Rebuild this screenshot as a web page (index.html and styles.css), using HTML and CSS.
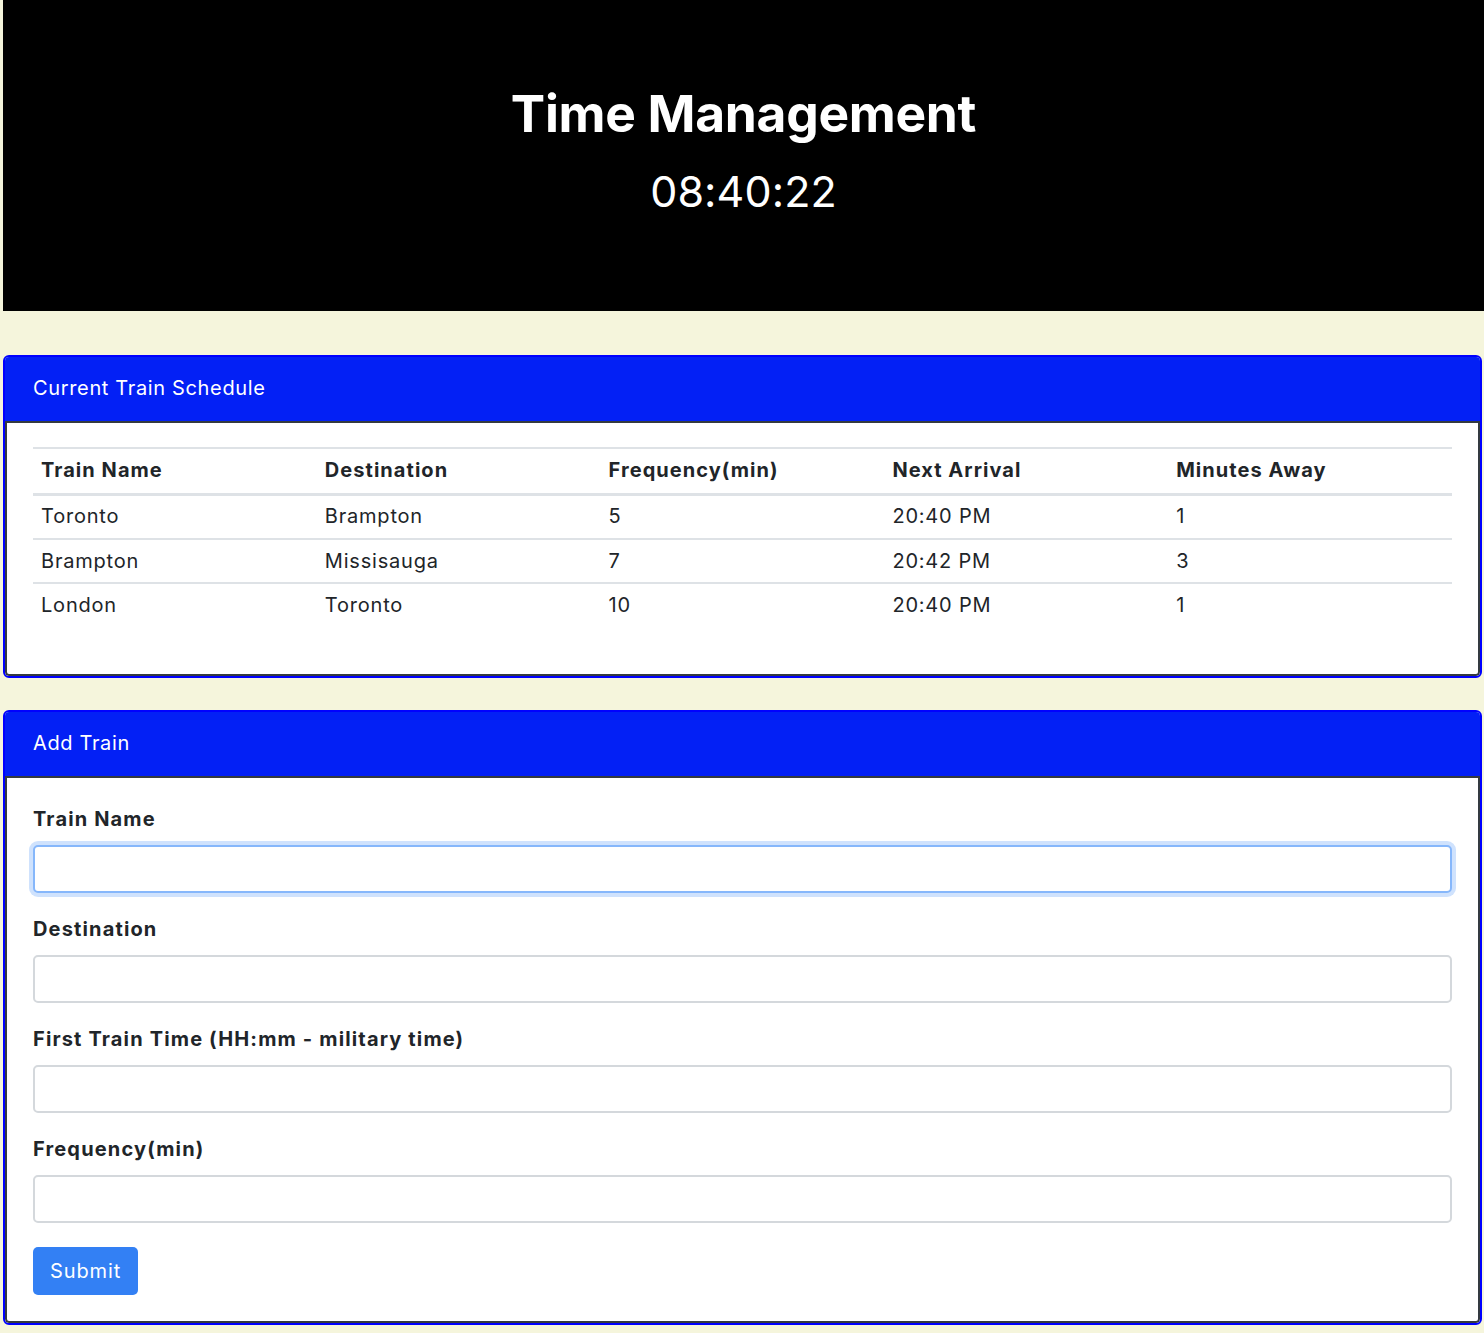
FILE: index.html
```html
<!DOCTYPE html>
<html lang="en">
<head>
<meta charset="utf-8">
<title>Time Management</title>
<link rel="stylesheet" href="styles.css">
</head>
<body>
<header class="jumbotron">
  <h1 class="title">Time Management</h1>
  <div class="clock">08:40:22</div>
</header>

<section class="card card-schedule">
  <div class="card-header">Current Train Schedule</div>
  <div class="card-body">
    <table class="table">
      <thead>
        <tr>
          <th>Train Name</th>
          <th>Destination</th>
          <th>Frequency(min)</th>
          <th>Next Arrival</th>
          <th>Minutes Away</th>
        </tr>
      </thead>
      <tbody>
        <tr><td>Toronto</td><td>Brampton</td><td>5</td><td>20:40 PM</td><td>1</td></tr>
        <tr><td>Brampton</td><td>Missisauga</td><td>7</td><td>20:42 PM</td><td>3</td></tr>
        <tr><td>London</td><td>Toronto</td><td>10</td><td>20:40 PM</td><td>1</td></tr>
      </tbody>
    </table>
  </div>
</section>

<section class="card card-form">
  <div class="card-header">Add Train</div>
  <div class="card-body">
    <form class="train-form">
      <div class="form-group">
        <label class="form-label" for="train-name">Train Name</label>
        <input class="form-control focused" id="train-name" type="text">
      </div>
      <div class="form-group">
        <label class="form-label" for="destination">Destination</label>
        <input class="form-control" id="destination" type="text">
      </div>
      <div class="form-group">
        <label class="form-label" for="first-time">First Train Time (HH:mm - military time)</label>
        <input class="form-control" id="first-time" type="text">
      </div>
      <div class="form-group">
        <label class="form-label" for="frequency">Frequency(min)</label>
        <input class="form-control" id="frequency" type="text">
      </div>
      <button class="btn-submit" type="button">Submit</button>
    </form>
  </div>
</section>
</body>
</html>
```

FILE: styles.css
```css
* { box-sizing: border-box; }

html, body {
  margin: 0;
  padding: 0;
}

body {
  background: #f5f5dc;
  font-family: Inter, "Noto Sans", "Liberation Sans", sans-serif;
  color: #212529;
  padding: 0 0 8px 3px;
}

.jumbotron {
  background: #000;
  color: #fff;
  height: 311px;
  display: flex;
  flex-direction: column;
  align-items: center;
  padding-top: 81px;
}

.title {
  margin: 0;
  font-size: 51.5px;
  font-weight: 700;
  line-height: 64px;
  letter-spacing: -0.3px;
}

.clock {
  font-size: 43px;
  line-height: 52px;
  margin-top: 20px;
  font-weight: 400;
  letter-spacing: 0.1px;
}

.card {
  margin-right: 2px;
  border: 2px solid #0000ff;
  border-radius: 6px;
  overflow: hidden;
  background: #fff;
}

.card-schedule { margin-top: 44px; }
.card-form { margin-top: 32px; }

.card-header {
  background: #0320f5;
  color: #fff;
  font-size: 20px;
  line-height: 30px;
  padding: 16px 26px 18px 28px;
  letter-spacing: 0.65px;
}

.card-body {
  border: 2px solid #343a40;
  border-radius: 0 0 4px 4px;
  padding: 24px 26px 28px;
}

.card-form .card-body {
  padding-top: 26px;
  padding-bottom: 26px;
}

.train-form {
  display: flex;
  flex-direction: column;
}

.table {
  width: 100%;
  border-collapse: collapse;
  table-layout: fixed;
  font-size: 20px;
  margin-bottom: 20px;
  border-top: 2px solid #dee2e6;
  letter-spacing: 0.8px;
}

.table th {
  text-align: left;
  font-weight: 700;
  padding: 8px 8px 10px;
  line-height: 26px;
  border-bottom: 3px solid #dee2e6;
  letter-spacing: 1.05px;
}

.table td {
  padding: 8px 8px;
  line-height: 26px;
  border-top: 2px solid #dee2e6;
}

.table tbody tr:first-child td { border-top: 0; padding-top: 7px; padding-bottom: 9px; }

.form-group {
  display: flex;
  flex-direction: column;
  margin-bottom: 21px;
}

.form-label {
  font-size: 20px;
  font-weight: 700;
  line-height: 30px;
  margin-bottom: 11px;
  letter-spacing: 1.15px;
}

.form-control {
  height: 48px;
  width: 100%;
  border: 2px solid #d4d8dc;
  border-radius: 5px;
  background: #fff;
  font-size: 20px;
  font-family: inherit;
  padding: 6px 12px;
  outline: none;
}

.form-control.focused {
  border-color: #86b7fb;
  box-shadow: 0 0 0 4px #cfe2fd;
}

.btn-submit {
  align-self: flex-start;
  margin-top: 3px;
  background: #3380f4;
  color: #fff;
  border: 0;
  border-radius: 5px;
  height: 48px;
  padding: 0 17px;
  font-family: inherit;
  font-size: 20px;
  line-height: 48px;
  letter-spacing: 0.9px;
}
```
